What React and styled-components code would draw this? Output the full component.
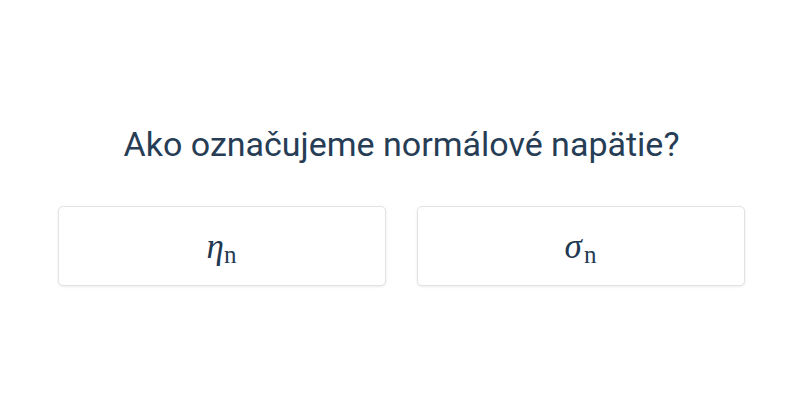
import React from 'react';
import styled, { createGlobalStyle } from 'styled-components';

const GlobalStyle = createGlobalStyle`
  body {
    margin: 0;
    background: #fff;
    font-family: Roboto, "Liberation Sans", sans-serif;
  }
`;

const Page = styled.div`
  width: 800px;
  height: 400px;
  display: flex;
  flex-direction: column;
  align-items: center;
  padding-top: 121px;
  box-sizing: border-box;
`;

const Question = styled.h2`
  margin: 0;
  font-size: 34px;
  font-weight: 400;
  line-height: 46px;
  color: #263d55;
  padding-left: 3px;
`;

const Options = styled.div`
  margin-top: 39px;
  display: grid;
  grid-template-columns: 328px 328px;
  gap: 31px;
  padding-left: 2px;
`;

const Option = styled.button`
  height: 80px;
  background: #fff;
  border: 1px solid #e2e2e2;
  border-radius: 5px;
  box-shadow: 0 1px 3px rgba(0, 0, 0, 0.08);
  display: flex;
  align-items: center;
  justify-content: center;
  cursor: pointer;
  padding: 0;
  color: #1f3a52;
`;

const Math = styled.span`
  font-family: "Liberation Serif", serif;
  line-height: 1;
  margin-top: 4px;
`;

const Symbol = styled.i`
  font-family: "Liberation Serif", serif;
  font-style: italic;
  font-size: 35px;
`;

const Sub = styled.sub`
  font-family: "Liberation Serif", serif;
  font-size: 25px;
  vertical-align: -5px;
  margin-left: ${p => p.$gap}px;
`;

export default function App() {
  return (
    <>
      <GlobalStyle />
      <Page>
        <Question>Ako označujeme normálové napätie?</Question>
        <Options>
          <Option>
            <Math><Symbol>η</Symbol><Sub $gap={0}>n</Sub></Math>
          </Option>
          <Option>
            <Math><Symbol>σ</Symbol><Sub $gap={2}>n</Sub></Math>
          </Option>
        </Options>
      </Page>
    </>
  );
}
